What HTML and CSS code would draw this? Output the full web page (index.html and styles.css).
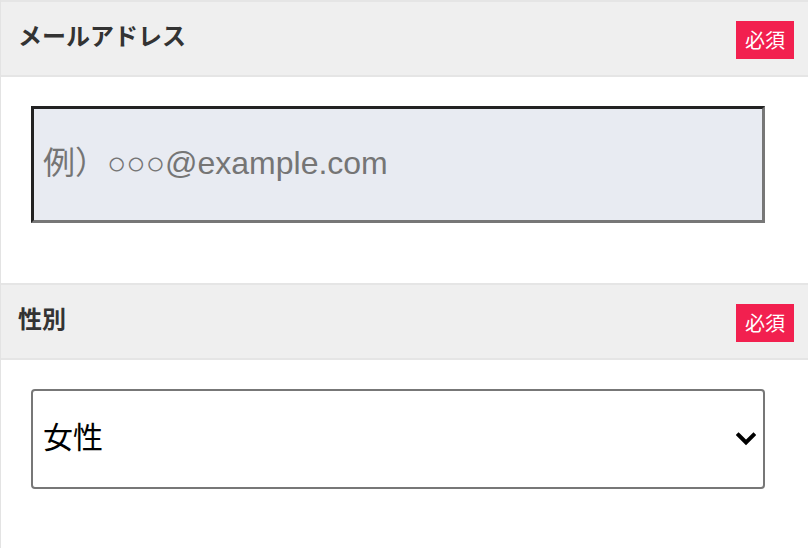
FILE: index.html
```html
<!DOCTYPE html>
<html lang="ja">
<head>
<meta charset="utf-8">
<title>フォーム</title>
<link rel="stylesheet" href="styles.css">
</head>
<body>
<div class="form">
  <div class="row">
    <div class="row-head">
      <span class="label">メールアドレス</span>
      <span class="badge">必須</span>
    </div>
    <div class="row-body body-email">
      <input class="email" type="email" placeholder="例）○○○@example.com">
    </div>
  </div>
  <div class="row">
    <div class="row-head">
      <span class="label">性別</span>
      <span class="badge">必須</span>
    </div>
    <div class="row-body body-select">
      <div class="select-wrap">
        <select class="select">
          <option>女性</option>
          <option>男性</option>
        </select>
        <svg class="chevron" width="20" height="14" viewBox="0 0 20 14" aria-hidden="true">
          <polyline points="2.5,3 10,10.5 17.5,3" fill="none" stroke="#000" stroke-width="4" stroke-linecap="square" stroke-linejoin="miter"/>
        </svg>
      </div>
    </div>
  </div>
</div>
</body>
</html>
```

FILE: styles.css
```css
html, body {
  margin: 0;
  padding: 0;
  background: #ffffff;
}

body {
  font-family: "Noto Sans CJK JP", "Liberation Sans", sans-serif;
  color: #333333;
}

.form {
  width: 807px;
  height: 548px;
  border-left: 1px solid #e3e3e3;
  overflow: hidden;
}

.row-head {
  height: 73px;
  border-top: 2px solid #e5e5e5;
  border-bottom: 2px solid #e5e5e5;
  background: #efefef;
  display: flex;
  align-items: center;
  justify-content: space-between;
  padding: 0 14px 0 17px;
}

.label {
  font-size: 24px;
  font-weight: 700;
  color: #333333;
  line-height: 1;
  margin-top: -7px;
}

.badge {
  width: 58px;
  height: 38px;
  background: #f2204f;
  color: #ffffff;
  font-size: 20px;
  line-height: 38px;
  text-align: center;
  margin-top: 2px;
}

.row-body {
  padding-left: 30px;
  padding-right: 43px;
}

.body-email {
  padding-top: 29px;
  padding-bottom: 60px;
}

.email {
  display: block;
  box-sizing: border-box;
  width: 734px;
  height: 117px;
  margin: 0;
  border-style: solid;
  border-width: 3px;
  border-color: #222222 #777777 #777777 #222222;
  background: #e8ebf2;
  padding: 0 0 3px 9px;
  font-family: "Liberation Sans", "Noto Sans CJK JP", sans-serif;
  font-size: 32px;
  color: #000;
  outline: none;
}

.email::placeholder {
  color: #757575;
  opacity: 1;
}

.body-select {
  padding-top: 29px;
}

.select-wrap {
  position: relative;
  width: 734px;
}

.select {
  display: block;
  box-sizing: border-box;
  width: 734px;
  height: 100px;
  margin: 0;
  appearance: none;
  -webkit-appearance: none;
  border: 2px solid #777777;
  border-radius: 4px;
  background: #ffffff;
  padding: 0 0 8px 10px;
  font-family: "Noto Sans CJK JP", "Liberation Sans", sans-serif;
  font-size: 30px;
  color: #000000;
  outline: none;
}

.chevron {
  position: absolute;
  right: 9px;
  top: 43px;
  pointer-events: none;
}
```
